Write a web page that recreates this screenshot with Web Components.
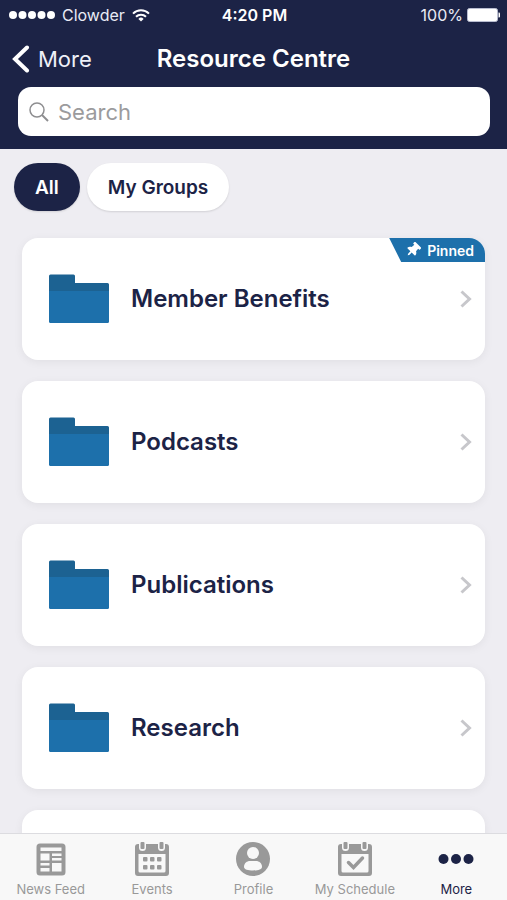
<!DOCTYPE html>
<html lang="en">
<head>
<meta charset="utf-8">
<meta name="viewport" content="width=device-width, initial-scale=1">
<title>Resource Centre</title>
<style>
  html, body { height: 100%; }
  body {
    margin: 0;
    font-family: Inter, "Liberation Sans", sans-serif;
    --navy: #1c2346;
    --blue: #1d70ab;
    --blue-dark: #1c6292;
    --page: #eeedf2;
    --muted: #999;
  }
</style>
</head>
<body>
<resource-app>
  <status-bar slot="top" carrier="Clowder" time="4:20 PM" battery="100%"></status-bar>
  <nav-header slot="top" back="More">Resource Centre</nav-header>
  <search-field slot="top" label="Search"></search-field>

  <filter-chips slot="filters">
    <filter-chip selected>All</filter-chip>
    <filter-chip>My Groups</filter-chip>
  </filter-chips>

  <folder-card pinned>Member Benefits</folder-card>
  <folder-card>Podcasts</folder-card>
  <folder-card>Publications</folder-card>
  <folder-card>Research</folder-card>
  <folder-card></folder-card>

  <tab-bar slot="tabs">
    <tab-item icon="news">News Feed</tab-item>
    <tab-item icon="events">Events</tab-item>
    <tab-item icon="profile">Profile</tab-item>
    <tab-item icon="schedule">My Schedule</tab-item>
    <tab-item icon="more" current>More</tab-item>
  </tab-bar>
</resource-app>

<script>
  class BaseElement extends HTMLElement {
    constructor() {
      super();
      this.attachShadow({ mode: "open" });
    }
    connectedCallback() {
      this.shadowRoot.innerHTML = this.view();
    }
  }

  customElements.define("resource-app", class extends BaseElement {
    view() {
      return `
        <style>
          :host { display: flex; flex-direction: column; height: 100vh; background: var(--page); overflow: hidden; }
          header { flex: none; background: var(--navy); color: #fff; padding-bottom: 13px; }
          main { flex: 1; min-height: 0; overflow-y: auto; scrollbar-width: none; }
          .cards { display: flex; flex-direction: column; gap: 21px; padding: 27px 22px 21px; }
        </style>
        <header><slot name="top"></slot></header>
        <main>
          <slot name="filters"></slot>
          <div class="cards"><slot></slot></div>
        </main>
        <slot name="tabs"></slot>`;
    }
  });

  customElements.define("status-bar", class extends BaseElement {
    view() {
      const dots = [4, 13.5, 23, 32.5, 42].map(x => `<circle cx="${x}" cy="4" r="4"/>`).join("");
      return `
        <style>
          :host { display: grid; grid-template-columns: 1fr auto 1fr; align-items: center; height: 30px; padding: 0 7px 0 9px; font-size: 16px; color: #e9ebf5; }
          .left, .right { display: flex; align-items: center; }
          .left { gap: 7px; }
          .right { justify-content: flex-end; gap: 4px; }
          .time { font-weight: 600; color: #fff; }
          svg { display: block; flex: none; }
        </style>
        <div class="left">
          <svg width="46" height="8" viewBox="0 0 46 8" fill="#fff" aria-hidden="true">${dots}</svg>
          <span>${this.getAttribute("carrier")}</span>
          <svg width="18" height="13" viewBox="0 0 18 13" fill="none" stroke="#fff" stroke-width="2" aria-hidden="true">
            <path d="M1 4.6a11.3 11.3 0 0 1 16 0"/>
            <path d="M4 7.8a7 7 0 0 1 10 0"/>
            <path d="M9 12.5 6.4 9.9a3.7 3.7 0 0 1 5.2 0z" fill="#fff" stroke="none"/>
          </svg>
        </div>
        <span class="time">${this.getAttribute("time")}</span>
        <div class="right">
          <span>${this.getAttribute("battery")}</span>
          <svg width="33" height="14" viewBox="0 0 33 14" aria-hidden="true">
            <rect x=".5" y=".5" width="30" height="13" rx="2" fill="#fff" stroke="#b9bdd0"/>
            <path d="M31.5 4.5h.5a1 1 0 0 1 1 1v3a1 1 0 0 1-1 1h-.5z" fill="#fff"/>
          </svg>
        </div>`;
    }
  });

  customElements.define("nav-header", class extends BaseElement {
    view() {
      return `
        <style>
          :host { display: grid; grid-template-columns: 1fr auto 1fr; align-items: center; height: 57px; padding: 0 12px; }
          button { display: flex; align-items: center; gap: 8px; justify-self: start; border: 0; padding: 0; background: none; color: #eef0f8; font: inherit; font-size: 22px; cursor: pointer; }
          h1 { margin: 0; font-size: 24px; line-height: 28px; font-weight: 600; }
          svg { display: block; }
        </style>
        <button type="button">
          <svg width="18" height="28" viewBox="0 0 18 28" fill="none" stroke="#fff" stroke-width="4" stroke-linecap="round" aria-hidden="true"><path d="M15 2.5 3 14l12 11.5"/></svg>
          ${this.getAttribute("back")}
        </button>
        <h1><slot></slot></h1>`;
    }
  });

  customElements.define("search-field", class extends BaseElement {
    view() {
      return `
        <style>
          :host { display: block; padding: 0 17px 0 18px; }
          label { display: flex; align-items: center; gap: 9px; height: 49px; padding: 0 11px; border-radius: 13px; background: #fff; }
          input { flex: 1; min-width: 0; border: 0; padding: 0; outline: none; background: none; font: inherit; font-size: 22px; color: var(--navy); }
          input::placeholder { color: #9b9b9d; opacity: 1; }
          svg { flex: none; }
        </style>
        <label>
          <svg width="20" height="20" viewBox="0 0 20 20" fill="none" stroke="#8e8e90" aria-hidden="true">
            <circle cx="8" cy="8" r="7" stroke-width="1.5"/><path d="m13 13 6 6" stroke-width="2"/>
          </svg>
          <input type="text" placeholder="${this.getAttribute("label")}" aria-label="${this.getAttribute("label")}">
        </label>`;
    }
  });

  customElements.define("filter-chips", class extends BaseElement {
    view() {
      return `
        <style>:host { display: flex; gap: 7px; padding: 14px 14px 0; }</style>
        <slot></slot>`;
    }
  });

  customElements.define("filter-chip", class extends BaseElement {
    view() {
      return `
        <style>
          :host { display: block; }
          button { height: 48px; padding: 0 21px; border: 0; border-radius: 24px; background: #fff; color: var(--navy); font: inherit; font-size: 19px; font-weight: 600; box-shadow: 0 1px 2px #0000001f; cursor: pointer; }
          :host([selected]) button { background: var(--navy); color: #fff; }
        </style>
        <button type="button" aria-pressed="${this.hasAttribute("selected")}"><slot></slot></button>`;
    }
  });

  customElements.define("folder-card", class extends BaseElement {
    view() {
      const badge = this.hasAttribute("pinned") ? `
        <span class="badge">
          <svg width="16" height="16" viewBox="-256 -256 512 512" fill="#fff" aria-hidden="true">
            <path transform="rotate(45) scale(.92) translate(-192 -256)" d="M298 214 286 96h42c13 0 24-11 24-24V24c0-13-11-24-24-24H56C43 0 32 11 32 24v48c0 13 11 24 24 24h42L86 214C37 237 0 277 0 328c0 13 11 24 24 24h136v104l25 52c3 6 11 6 14 0l25-52V352h136c13 0 24-11 24-24 0-51-38-91-86-114z"/>
          </svg>Pinned
        </span>` : "";
      return `
        <style>
          :host { display: block; }
          a { position: relative; display: flex; align-items: center; height: 122px; padding: 0 13px 0 27px; box-sizing: border-box; border-radius: 16px; background: #fff; color: var(--navy); text-decoration: none; box-shadow: 0 2px 10px #0000000f; overflow: hidden; }
          .name { flex: 1; margin-left: 22px; font-size: 24px; line-height: 28px; font-weight: 600; }
          .badge { position: absolute; top: 0; right: 0; display: flex; align-items: center; gap: 6px; height: 24px; padding: 0 11px 0 16px; background: var(--blue); color: #fff; font-size: 14px; font-weight: 600; clip-path: polygon(0 0, 100% 0, 100% 100%, 12px 100%); }
          svg { display: block; flex: none; }
        </style>
        <a href="#">
          <svg width="60" height="50" viewBox="0 0 60 50" aria-hidden="true">
            <path d="M0 20V2A1.5 1.5 0 0 1 1.5.5h23A1.5 1.5 0 0 1 26 2v7h32.5a1.5 1.5 0 0 1 1.5 1.5V20z" fill="var(--blue-dark)"/>
            <path d="M0 17h60v30.5a1.500 1.500 0 0 1-1.500 1.500h-57A1.500 1.500 0 0 1 0 47.500z" fill="var(--blue)"/>
          </svg>
          <span class="name"><slot></slot></span>
          <svg width="12" height="18" viewBox="0 0 12 18" fill="none" stroke="#c7c7cb" stroke-width="3" aria-hidden="true"><path d="m1.5 1.5 8 7.500-8 7.500"/></svg>
          ${badge}
        </a>`;
    }
  });

  customElements.define("tab-bar", class extends BaseElement {
    view() {
      return `
        <style>
          :host { display: block; flex: none; border-top: 1px solid #dcdce0; background: #f8f8f8; }
          nav { display: grid; grid-template-columns: repeat(5, 1fr); height: 66px; }
        </style>
        <nav aria-label="Main"><slot></slot></nav>`;
    }
  });

  const calendar = `
    <path d="M3 3h1v3.500a3.500 3.500 0 0 0 7 0V3h12v3.500a3.500 3.500 0 0 0 7 0V3h1a3 3 0 0 1 3 3v26a3 3 0 0 1-3 3H3a3 3 0 0 1-3-3V6a3 3 0 0 1 3-3zM3.500 13v17a1.500 1.500 0 0 0 1.500 1.500h24a1.500 1.500 0 0 0 1.500-1.500V13z" fill-rule="evenodd"/>
    <rect x="5.5" y="1" width="4" height="7" rx="1"/><rect x="24.5" y="1" width="4" height="7" rx="1"/>`;
  const icons = {
    news: `
      <path fill-rule="evenodd" d="M6 2.500h22a3.500 3.500 0 0 1 3.500 3.500v25a3.500 3.500 0 0 1-3.500 3.500H6A3.500 3.500 0 0 1 2.500 31V6A3.500 3.500 0 0 1 6 2.500zM6.500 6.500v3.500h21V6.500zM6.500 12.500v7h9v-7zM18 12.500v2.500h9.500v-2.500zM18 17v2.500h9.500V17zM6.500 22v2.500h9V22zM6.500 27v3.500h9V27zM18 22v8.500h9.500V22z"/>`,
    events: calendar + [8, 15, 22].map(x => [16, 24].map(y => `<rect x="${x}" y="${y}" width="4.5" height="4.5" rx="1"/>`).join("")).join(""),
    profile: `
      <circle cx="17" cy="18" r="17"/>
      <circle cx="17" cy="12" r="6" fill="#f8f8f8"/>
      <path d="M8 26c0-4 3-6 6-6h6c3 0 6 2 6 6 0 2.500-4 3.500-9 3.500S8 28.500 8 26z" fill="#f8f8f8"/>`,
    schedule: calendar + `<path d="m10.500 21.500 5 5 9-9.500" fill="none" stroke="currentColor" stroke-width="3.5" stroke-linecap="round"/>`,
    more: `<circle cx="4.500" cy="18" r="5"/><circle cx="17" cy="18" r="5"/><circle cx="29.500" cy="18" r="5"/>`
  };

  customElements.define("tab-item", class extends BaseElement {
    view() {
      const current = this.hasAttribute("current");
      return `
        <style>
          :host { display: block; color: var(--muted); }
          :host([current]) { color: var(--navy); }
          a { display: flex; flex-direction: column; align-items: center; gap: 4px; padding-top: 7px; color: inherit; text-decoration: none; font-size: 13px; line-height: 16px; white-space: nowrap; }
          svg { display: block; overflow: visible; }
        </style>
        <a href="#"${current ? ' aria-current="page"' : ""}>
          <svg width="34" height="36" viewBox="0 0 34 36" fill="currentColor" aria-hidden="true">${icons[this.getAttribute("icon")]}</svg>
          <span><slot></slot></span>
        </a>`;
    }
  });
</script>
</body>
</html>
